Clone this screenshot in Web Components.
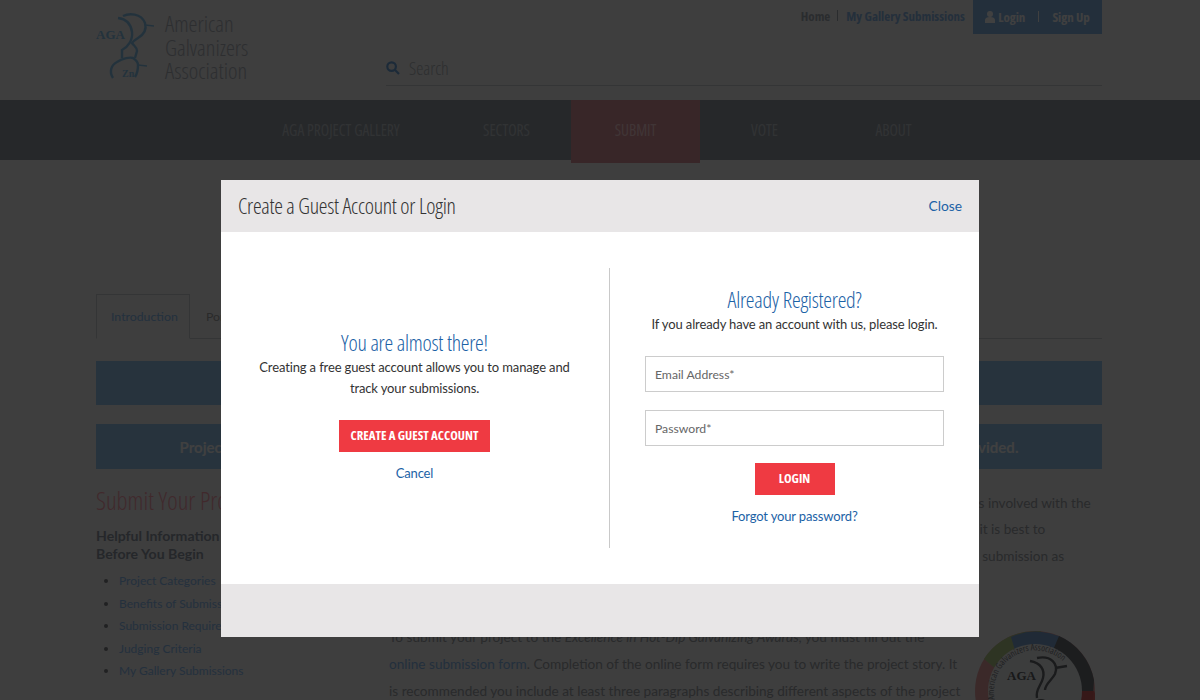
<!DOCTYPE html>
<html lang="en">
<head>
<meta charset="utf-8">
<title>Create a Guest Account or Login</title>
<style>
  html, body { margin: 0; height: 700px; overflow: hidden; background: #f5f6f8; }
  body { font-family: Lato, "Liberation Sans", sans-serif; color: #333; }
</style>
</head>
<body>
<aga-page></aga-page>
<aga-modal title="Create a Guest Account or Login">
  <guest-panel></guest-panel>
  <login-panel></login-panel>
</aga-modal>

<script>
const COND = `"Open Sans", "Liberation Sans", sans-serif`;

// Small base class: each element sets static css and html
class ShadowBase extends HTMLElement {
  constructor() {
    super();
    this.attachShadow({ mode: 'open' });
  }
  connectedCallback() {
    this.shadowRoot.innerHTML = `<style>${this.constructor.css}</style>${this.markup()}`;
  }
}

class AgaLogo extends ShadowBase {
  static css = `
    :host { display: flex; gap: 11px; align-items: flex-start; }
    svg { width: 58px; height: 76px; margin-top: 10px; display: block; }
    .name {
      font: 300 22.6px/23.5px ${COND}; font-stretch: 75%;
      color: #b4b8c0; padding-top: 12px;
    }
    text { font-family: "Liberation Serif", serif; font-weight: 700; fill: #8cc8f0; }
  `;
  markup() {
    return `
      <svg viewBox="0 0 58 76" fill="none" stroke="#8cc8f0" stroke-width="2.4" aria-hidden="true">
        <path d="M22 8 C30 9 35 14 36 22 C37 30 32 37 26 40 L26 48"/>
        <path d="M27 6 C33 3 45 3 49 13 C51 20 47 25 42 28 C39 30 37 31 36 33 C38 36 41 37 41 41 L39 48"/>
        <path stroke-width="1.4" d="M49 15 L58 16"/>
        <path d="M17 68 C13 62 15 55 21 52 C27 48 34 47 37 48 C40 50 42 52 42 55 C42 60 41 64 39 67"/>
        <path stroke-width="1.4" d="M42 55 L51 56"/>
        <text x="0" y="28.5" font-size="13" stroke="none">AGA</text>
        <text x="26" y="67" font-size="10" stroke="none">Zn</text>
      </svg>
      <div class="name">American<br>Galvanizers<br>Association</div>`;
  }
}

class AgaHeader extends ShadowBase {
  static css = `
    :host { display: block; height: 100px; }
    .wrap { width: 1006px; margin-left: 96px; height: 100px; display: flex; justify-content: space-between; }
    .right { width: 716px; display: flex; flex-direction: column; }
    .top { display: flex; justify-content: flex-end; align-items: flex-start; height: 50px; }
    .links { display: flex; align-items: center; height: 31px; font: 700 13px ${COND}; font-stretch: 75%; color: #a8b0b8; }
    .links i { width: 1px; height: 11px; background: #a8b0b8; margin: 0 8px 0 7px; }
    .links b { color: #8fbcec; font-weight: 700; }
    .account {
      margin-left: 8px; width: 129px; height: 34px; background: #8cbcec; color: #fff;
      display: flex; align-items: center; justify-content: center; box-sizing: border-box;
      font: 700 13px ${COND}; font-stretch: 75%; padding-bottom: 1px;
    }
    .account i { width: 1px; height: 11px; background: #fff; margin: 0 13px; }
    .account svg { width: 10px; height: 12px; margin-right: 3px; }
    .search {
      display: flex; align-items: center; gap: 9px; height: 36px; box-sizing: border-box;
      border-bottom: 1px solid #d0d4d8; color: #b4b8bc; font: 300 18px ${COND}; font-stretch: 75%;
    }
    .search svg { width: 14px; height: 14px; }
  `;
  markup() {
    return `
      <div class="wrap">
        <aga-logo></aga-logo>
        <div class="right">
          <div class="top">
            <div class="links">Home<i></i><b>My Gallery Submissions</b></div>
            <div class="account">
              <svg viewBox="0 0 10 12" fill="#fff"><circle cx="5" cy="3" r="3"/><path d="M0 12 V9 C0 7 2 6 5 6 C8 6 10 7 10 9 V12Z"/></svg>
              Login<i></i>Sign Up
            </div>
          </div>
          <div class="search">
            <svg viewBox="0 0 14 14" fill="none" stroke="#6fa8e0" stroke-width="2.2"><circle cx="5.6" cy="5.6" r="4.3"/><path d="M8.8 8.8 L13 13"/></svg>
            Search
          </div>
        </div>
      </div>`;
  }
}

class AgaNav extends ShadowBase {
  static css = `
    :host { display: block; height: 60px; background: #98a0a8; }
    nav { width: 1006px; margin-left: 96px; height: 60px; display: flex; justify-content: center; }
    a {
      width: 129px; height: 60px; text-align: center; white-space: nowrap;
      font: 400 15.4px/62px ${COND}; font-stretch: 75%; color: #c4cad0;
    }
    a.wide { width: 202px; }
    a.active { height: 63px; background: #e098a0; color: #ffd4d8; }
  `;
  markup() {
    return `
      <nav>
        <a class="wide">AGA PROJECT GALLERY</a>
        <a>SECTORS</a>
        <a class="active">SUBMIT</a>
        <a>VOTE</a>
        <a>ABOUT</a>
      </nav>`;
  }
}

class AgaTabs extends ShadowBase {
  static css = `
    :host { display: block; height: 45px; border-bottom: 1px solid #d0d4d8; box-sizing: border-box; }
    .row { display: flex; }
    .tab {
      height: 44px; line-height: 44px; padding: 0 15px; font-size: 12.3px; box-sizing: border-box;
      color: #a8a8a8; border: 1px solid transparent;
    }
    .tab.on { color: #8cc0f4; border-color: #d0d4d8; border-bottom-color: #f5f6f8; height: 45px; width: 94px; padding: 0 14px; }
  `;
  markup() {
    return `<div class="row"><div class="tab on">Introduction</div><div class="tab">Portfolio</div></div>`;
  }
}

class AgaBanner extends ShadowBase {
  static css = `
    :host {
      display: flex; align-items: center; justify-content: center; height: 45px; background: #9cccf4;
      color: #fff; font-size: 15px; font-weight: 700; white-space: nowrap;
    }
  `;
  markup() { return `<slot></slot>`; }
}

class AgaSidebar extends ShadowBase {
  static css = `
    :host { display: block; width: 293px; flex: none; }
    h2 { margin: 0; font: 300 25px/34px ${COND}; font-stretch: 75%; color: #ffa4b0; white-space: nowrap; }
    h3 { margin: 10px 0 7px; font-size: 14.1px; line-height: 18px; font-weight: 700; color: #949ca8; }
    ul { margin: 0; padding: 0 0 0 23px; font-size: 12px; line-height: 22.5px; }
    li { color: #90c0f4; }
    li::marker { color: #808488; }
  `;
  markup() {
    return `
      <h2>Submit Your Project</h2>
      <h3>Helpful Information<br>Before You Begin</h3>
      <ul>
        <li>Project Categories</li>
        <li>Benefits of Submission</li>
        <li>Submission Requirements</li>
        <li>Judging Criteria</li>
        <li>My Gallery Submissions</li>
      </ul>`;
  }
}

class AgaBadge extends ShadowBase {
  static css = `
    :host { display: block; float: right; width: 120px; height: 120px; margin: 4px 7px 0 0; }
    svg { display: block; width: 120px; height: 120px; }
    text { font-family: ${COND}; font-stretch: 75%; }
    .aga { font-family: "Liberation Serif", serif; font-weight: 700; }
  `;
  markup() {
    return `
      <svg viewBox="0 0 120 120" fill="none" aria-hidden="true">
        <circle cx="60" cy="63" r="60" fill="#e0605f" opacity=".55"/>
        <path d="M9 31 A60 60 0 0 1 50 4 L66 3 L60 20 A43 43 0 0 0 22 42 Z" fill="#b8d08c"/>
        <path d="M36 9 A60 60 0 0 1 96 15 L84 40 A43 43 0 0 0 44 36 Z" fill="#7fa8d8"/>
        <path d="M84 8 A60 60 0 0 1 119 52 L115 120 L92 120 L103 63 A43 43 0 0 0 78 22 Z" fill="#707478"/>
        <path d="M119 63 A60 60 0 0 1 114 120 L100 120 L106 63 Z" fill="#e0605f" opacity=".9"/>
        <circle cx="60" cy="63" r="47" fill="#f0f1f3"/>
        <path id="ring-top" d="M21 76 A41 41 0 1 1 99 76"/>
        <text font-size="9" fill="#808488"><textPath href="#ring-top" startOffset="3%">American Galvanizers Association</textPath></text>
        <text class="aga" x="32" y="52" font-size="13" fill="#606468">AGA</text>
        <path stroke="#686c70" stroke-width="2.4" d="M55 33 C66 35 70 42 68 50 C66 58 60 62 62 70 M62 30 C76 27 84 36 80 46 C77 52 70 56 70 62 M80 40 L92 38"/>
        <circle cx="66" cy="80" r="8" stroke="#686c70" stroke-width="2"/>
      </svg>`;
  }
}

class AgaArticle extends ShadowBase {
  static css = `
    :host { display: block; flex: 1; font-size: 13.6px; line-height: 26.7px; color: #a4a8ac; padding-top: 6.5px; }
    p { margin: 0; white-space: nowrap; }
    p + p { margin-top: 28px; }
    a { color: #8cbcf0; }
  `;
  markup() {
    return `
      <p>Before you begin your submissions, please identify all of the partners, firms, plus other project teams involved with the<br>
      project, since credit gets shared across each of the team members listed on your entry form, and so it is best to<br>
      gather the names, photos, and other details in advance of your deadline to make your online project submission as<br>
      complete as possible.</p>
      <p><aga-badge></aga-badge>To submit your project to the <em>Excellence in Hot-Dip Galvanizing Awards</em>, you must fill out the<br>
      <a>online submission form</a>. Completion of the online form requires you to write the project story. It<br>
      is recommended you include at least three paragraphs describing different aspects of the project</p>`;
  }
}

class AgaPage extends ShadowBase {
  static css = `
    :host { display: block; height: 700px; overflow: hidden; }
    main { width: 1006px; margin: 134px 0 0 96px; }
    aga-banner.first { height: 44px; margin-bottom: 19px; }
    aga-tabs { margin-bottom: 22px; }
    .cols { display: flex; margin-top: 14px; }
  `;
  markup() {
    return `
      <aga-header></aga-header>
      <aga-nav></aga-nav>
      <main>
        <aga-tabs></aga-tabs>
        <aga-banner class="first">&nbsp;</aga-banner>
        <aga-banner>Project submissions are judged on the information you enter, so please be sure that all required fields and images are provided.</aga-banner>
        <div class="cols">
          <aga-sidebar></aga-sidebar>
          <aga-article></aga-article>
        </div>
      </main>`;
  }
}

class AgaModal extends ShadowBase {
  static css = `
    :host {
      position: fixed; inset: 0; display: block;
      background: rgba(0, 0, 0, .75);
    }
    .dialog { position: absolute; left: 221px; top: 180px; width: 758px; height: 457px; background: #fff; display: flex; flex-direction: column; }
    header {
      height: 52px; flex: none; background: #e8e6e7; display: flex; align-items: center;
      justify-content: space-between; padding: 0 17px; box-sizing: border-box;
    }
    h1 { margin: -2px 0 0; font: 300 22px ${COND}; font-stretch: 75%; letter-spacing: -.3px; color: #333; }
    a { margin-top: -2px; font-size: 13.8px; color: #1c62a6; }
    .body { flex: 1; display: grid; grid-template-columns: 389px 369px; padding: 36px 0; box-sizing: border-box; }
    ::slotted(guest-panel) { border-right: 1px solid #c9c9c9; }
    footer { height: 53px; flex: none; background: #e8e6e7; }
  `;
  markup() {
    return `
      <div class="dialog" role="dialog">
        <header><h1>${this.getAttribute('title')}</h1><a>Close</a></header>
        <div class="body"><slot></slot></div>
        <footer></footer>
      </div>`;
  }
}

class AgaButton extends ShadowBase {
  static css = `
    :host {
      display: inline-flex; align-items: center; justify-content: center; height: 32px; box-sizing: border-box;
      background: #ef3a42; color: #fff; font: 700 12.8px ${COND}; font-stretch: 75%; white-space: nowrap; padding-bottom: 1px;
    }
  `;
  markup() { return `<slot></slot>`; }
}

class AgaField extends ShadowBase {
  static css = `
    :host {
      display: flex; align-items: center; width: 299px; height: 36px; box-sizing: border-box;
      border: 1px solid #ccc; padding: 1px 9px 0; font-size: 12.2px; color: #666;
    }
  `;
  markup() { return `<slot></slot>`; }
}

const panelCss = `
  :host { display: flex; flex-direction: column; align-items: center; justify-content: center; text-align: center; padding-bottom: 6px; }
  h2 { margin: -1px 0 1px; font: 300 22px/28px ${COND}; font-stretch: 75%; letter-spacing: -.25px; color: #1c62a6; }
  p { margin: 0; font-size: 13px; letter-spacing: -.13px; line-height: 21px; color: #333; }
  a { font-size: 13px; letter-spacing: -.15px; line-height: 18px; color: #1c62a6; }
`;

class GuestPanel extends ShadowBase {
  static css = panelCss + `
    :host { padding-right: 1px; }
    aga-button { width: 151px; margin: 21px 0 12px; }
  `;
  markup() {
    return `
      <h2>You are almost there!</h2>
      <p>Creating a free guest account allows you to manage and<br>track your submissions.</p>
      <aga-button>CREATE A GUEST ACCOUNT</aga-button>
      <a>Cancel</a>`;
  }
}

class LoginPanel extends ShadowBase {
  static css = panelCss + `
    p { margin-bottom: 21px; }
    aga-field + aga-field { margin-top: 18px; }
    aga-button { width: 80px; margin: 17px 0 12px; }
  `;
  markup() {
    return `
      <h2>Already Registered?</h2>
      <p>If you already have an account with us, please login.</p>
      <aga-field>Email Address*</aga-field>
      <aga-field>Password*</aga-field>
      <aga-button>LOGIN</aga-button>
      <a>Forgot your password?</a>`;
  }
}

customElements.define('aga-logo', AgaLogo);
customElements.define('aga-header', AgaHeader);
customElements.define('aga-nav', AgaNav);
customElements.define('aga-tabs', AgaTabs);
customElements.define('aga-banner', AgaBanner);
customElements.define('aga-sidebar', AgaSidebar);
customElements.define('aga-badge', AgaBadge);
customElements.define('aga-article', AgaArticle);
customElements.define('aga-page', AgaPage);
customElements.define('aga-modal', AgaModal);
customElements.define('aga-button', AgaButton);
customElements.define('aga-field', AgaField);
customElements.define('guest-panel', GuestPanel);
customElements.define('login-panel', LoginPanel);
</script>
</body>
</html>
